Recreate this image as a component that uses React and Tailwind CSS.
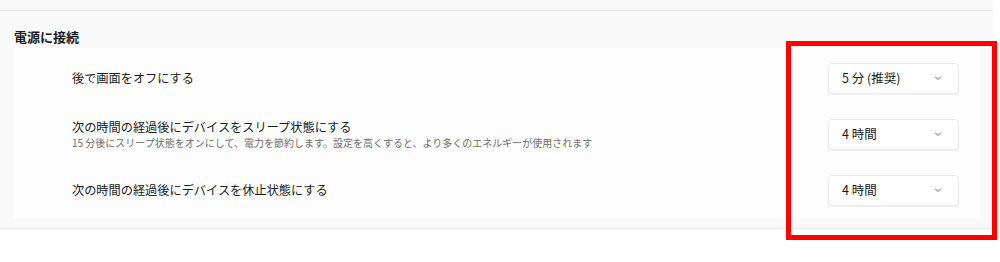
import React from 'react'

const rows = [
  { title: '後で画面をオフにする', value: '5 分 (推奨)' },
  {
    title: '次の時間の経過後にデバイスをスリープ状態にする',
    sub: '15 分後にスリープ状態をオンにして、電力を節約します。設定を高くすると、より多くのエネルギーが使用されます',
    value: '4 時間',
  },
  { title: '次の時間の経過後にデバイスを休止状態にする', value: '4 時間' },
]

function Chevron() {
  return (
    <svg width="10" height="10" viewBox="0 0 10 10" className="text-[#5f5f5f]">
      <path d="M2.5 4 L5 6.5 L7.5 4" fill="none" stroke="currentColor" strokeWidth="1" strokeLinecap="round" strokeLinejoin="round" />
    </svg>
  )
}

function App() {
  return (
    <div className="relative w-[1000px] h-[262px] bg-white overflow-hidden text-[#1b1b1b]" style={{ fontFamily: '"Noto Sans CJK JP", "Noto Sans", sans-serif' }}>
      <div className="h-[10px] w-[993px] bg-[#f9f9f9]"></div>
      <div className="w-[993px] h-[219px] border-y border-[#e6e6e6] bg-[#f9f9f9] pt-[15px]">
        <h2 className="pl-[14px] h-[22px] text-[13px] font-bold leading-[22px]">電源に接続</h2>
        <div className="ml-[14px] mr-[13px] bg-[#fdfdfd] pt-[2px]">
          {rows.map((r, i) => (
            <div key={i} className="h-[56px] flex items-center pl-[58px] pr-[21px]">
              <div className="flex-1 flex flex-col">
                <span className="text-[12.2px] leading-[17px]">{r.title}</span>
                {r.sub && <span className="text-[10px] leading-[14px] text-[#6e6e6e]">{r.sub}</span>}
              </div>
              <div className="w-[131px] h-[31px] flex items-center justify-between pl-[13px] pr-[15px] bg-white border border-[#ececec] rounded-[4px] shadow-[0_1px_1px_rgba(0,0,0,0.06)]">
                <span className="text-[12.5px]">{r.value}</span>
                <Chevron />
              </div>
            </div>
          ))}
        </div>
      </div>
      <div className="absolute left-[786px] top-[41px] w-[211px] h-[199px] border-[5px] border-[#ff0000]"></div>
    </div>
  )
}

export default App
